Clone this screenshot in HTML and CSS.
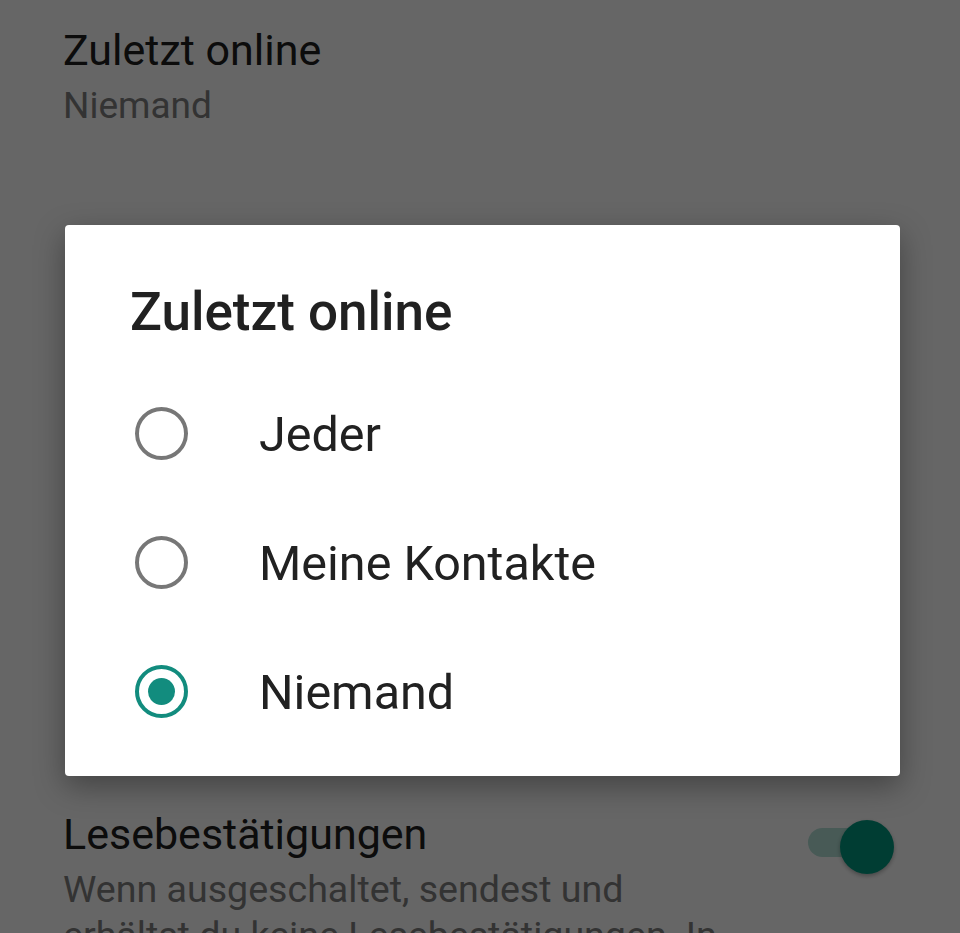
FILE: index.html
```html
<!DOCTYPE html>
<html lang="de">
<head>
<meta charset="utf-8">
<link rel="stylesheet" href="styles.css">
</head>
<body>
<main class="settings">
  <section class="item">
    <div class="item-title">Zuletzt online</div>
    <div class="item-sub">Niemand</div>
  </section>
  <section class="item item-toggle">
    <div class="item-text">
      <div class="item-title item-title-sm">Lesebestätigungen</div>
      <div class="item-sub item-sub-long">Wenn ausgeschaltet, sendest und erhältst du keine Lesebestätigungen. In</div>
    </div>
    <div class="switch"><span class="track"></span><span class="thumb"></span></div>
  </section>
</main>
<div class="scrim"></div>
<div class="dialog">
  <h2 class="dialog-title">Zuletzt online</h2>
  <ul class="options">
    <li class="option"><span class="radio"></span><span class="label">Jeder</span></li>
    <li class="option"><span class="radio"></span><span class="label">Meine Kontakte</span></li>
    <li class="option"><span class="radio checked"></span><span class="label">Niemand</span></li>
  </ul>
</div>
</body>
</html>
```
FILE: styles.css
```css
html, body {
  margin: 0;
  padding: 0;
  background: #fff;
  font-family: Roboto, "Liberation Sans", sans-serif;
  width: 960px;
  height: 933px;
  overflow: hidden;
}
.settings {
  padding: 0 63px;
}
.item {
  padding-top: 22px;
}
.item-title {
  font-size: 43px;
  line-height: 56px;
  color: #202020;
}
.item-title-sm {
  font-size: 43px;
}
.item-sub {
  margin-top: 5.5px;
  font-size: 37px;
  line-height: 44px;
  color: #808080;
}
.item-sub-long {
  margin-top: 4.5px;
  font-size: 37.6px;
  line-height: 46px;
}
.item-toggle {
  margin-top: 656px;
  display: flex;
  align-items: flex-start;
}
.item-text {
  width: 680px;
}
.switch {
  position: relative;
  width: 86px;
  height: 54px;
  margin-left: auto;
  margin-right: 3px;
  margin-top: 14px;
}
.track {
  position: absolute;
  left: 0;
  top: 8px;
  width: 70px;
  height: 29px;
  border-radius: 15px;
  background: #b4e1d7;
}
.thumb {
  position: absolute;
  left: 32px;
  top: 0;
  width: 54px;
  height: 54px;
  border-radius: 50%;
  background: #009a80;
  box-shadow: 0 2px 4px rgba(0,0,0,0.3);
}
.scrim {
  position: fixed;
  inset: 0;
  background: rgba(0,0,0,0.6);
}
.dialog {
  position: absolute;
  left: 65px;
  top: 225px;
  width: 835px;
  height: 551px;
  background: #fff;
  border-radius: 4px;
  box-shadow: 0 10px 30px rgba(0,0,0,0.35);
  box-sizing: border-box;
  padding-top: 56px;
}
.dialog-title {
  margin: 0;
  padding-left: 65px;
  font-size: 53px;
  font-weight: 500;
  line-height: 62px;
  color: #212121;
}
.options {
  list-style: none;
  margin: 25.5px 0 0;
  padding: 0;
}
.option {
  height: 129px;
  display: flex;
  align-items: center;
  padding-left: 70px;
}
.radio {
  flex: none;
  width: 53px;
  height: 53px;
  box-sizing: border-box;
  border: 4.5px solid #777;
  border-radius: 50%;
  display: flex;
  align-items: center;
  justify-content: center;
}
.radio.checked {
  border-color: #128c7e;
}
.radio.checked::after {
  content: "";
  width: 27px;
  height: 27px;
  border-radius: 50%;
  background: #128c7e;
}
.label {
  margin-left: 71px;
  padding-top: 3px;
  font-size: 48.5px;
  color: #212121;
}
```
